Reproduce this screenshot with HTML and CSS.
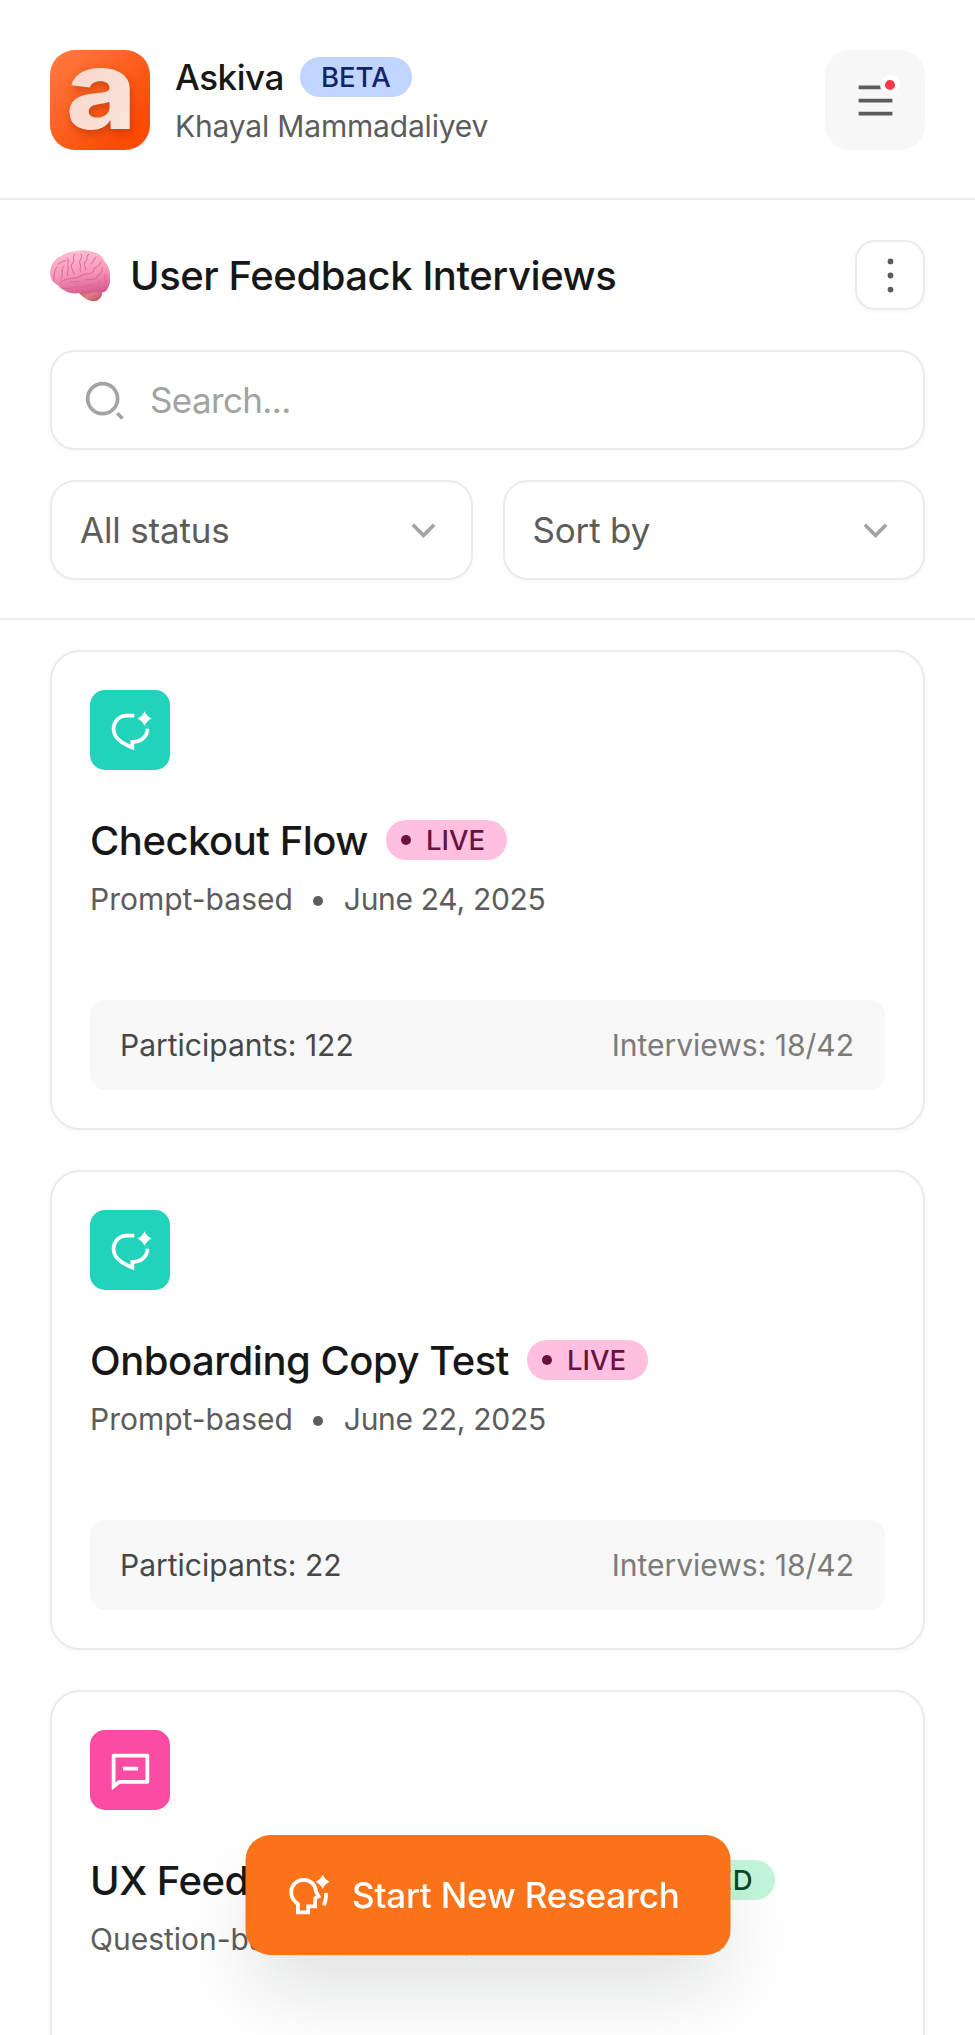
FILE: index.html
```html
<!DOCTYPE html>
<html lang="en">
<head>
    <meta charset="UTF-8">
    <meta name="viewport" content="width=device-width, initial-scale=1.0">
    <title>Askiva</title>
    <link rel="stylesheet" href="styles.css">
</head>
<body>
    <!-- shared icons -->
    <svg class="sprite" aria-hidden="true">
        <symbol id="chat-ai" viewBox="0 0 24 24">
            <path d="M14 3v2h-4a6 6 0 0 0-6 6c0 3.61 2.46 5.97 8 8.48V17h2a6 6 0 0 0 6-6h2a8 8 0 0 1-8 8v3.5c-5-2-12-5-12-11.5a8 8 0 0 1 8-8z"/>
            <path d="M19.5 1.7Q20.7 4.4 23.3 5.6Q20.7 6.8 19.5 9.5Q18.3 6.8 15.7 5.6Q18.3 4.4 19.5 1.7z"/>
        </symbol>
        <symbol id="arrow-down" viewBox="0 0 24 24">
            <path d="M12 13.172l4.95-4.95 1.414 1.414L12 16 5.636 9.636 7.05 8.222z"/>
        </symbol>
    </svg>

    <div class="page">
        <header class="header">
            <div class="logo"><span>a</span></div>
            <div class="brand">
                <div class="brand-name">Askiva <span class="badge beta">BETA</span></div>
                <div class="brand-user">Khayal Mammadaliyev</div>
            </div>
            <button class="menu-btn" aria-label="Menu">
                <svg class="icon" viewBox="0 0 24 24"><path d="M3 4h18v2H3zM3 11h18v2H3zM3 18h18v2H3z"/></svg>
                <span class="menu-dot"></span>
            </button>
        </header>

        <section class="toolbar">
            <div class="title-row">
                <svg class="brain" viewBox="0 0 60 54" aria-hidden="true">
                    <defs>
                        <linearGradient id="pink" x1="0.4" y1="0" x2="0.6" y2="1">
                            <stop offset="0" stop-color="#ffbfd3"/>
                            <stop offset="0.55" stop-color="#f794b8"/>
                            <stop offset="1" stop-color="#d75c8e"/>
                        </linearGradient>
                        <linearGradient id="stem" x1="0" y1="0" x2="1" y2="1">
                            <stop offset="0" stop-color="#a94a55"/>
                            <stop offset="0.5" stop-color="#dd7f8a"/>
                            <stop offset="1" stop-color="#b9505f"/>
                        </linearGradient>
                    </defs>
                    <path fill="url(#stem)" d="M28 42c5-4 18-5 24-1 1 4-2 9-6 10-8 1-12-3-18-9z"/>
                    <path fill="url(#pink)" d="M14 40C10 39 10 36 6 34 2 32 0 27 0 22 1 15 4 9 11 6c4-3 9-4 14-5 6-1 13-1 18 1 6 1 10 5 12 10 4 4 5 9 5 14 1 6-1 11-4 15-4 3-9 1-13 1-4 3-9-1-13 1-6 1-13 0-16-3z"/>
                    <path class="fold" d="M10 34c3-5 8-5 14-6 6 0 7-4 13-4 3 0 5-1 7-3M13 38c6 3 10-2 16-1s9-3 14-2M4 30c0-5 0-9 3-13M8 14c3-1 5-4 8-3M11 29c3-5-1-8 3-13M17 8c3 2 0 6 1 9s-2 5 0 9M25 4c-4 3 1 6-3 10-2 3 1 6 2 10M31 4c3 4-3 6-1 10s-2 5 1 8M39 4c-4 3 0 6-4 8-2 3 1 5 1 8M46 7c-3 3-2 5-5 7M43 20c2-4 7-3 8-8M47 26c3-1 6-4 5-8M35 30c5-2 7 1 12-2M20 32c4-1 6 1 9-1M48 40c-2-4 3-5 1-9M56 24c-3 4 1 8-2 12"/>
                </svg>
                <h1>User Feedback Interviews</h1>
                <button class="more-btn" aria-label="More">
                    <svg class="icon" viewBox="0 0 24 24"><circle cx="12" cy="4.5" r="1.55"/><circle cx="12" cy="12" r="1.55"/><circle cx="12" cy="19.5" r="1.55"/></svg>
                </button>
            </div>

            <div class="field search">
                <svg class="icon" viewBox="0 0 24 24"><path d="M11 2a9 9 0 1 1 0 18 9 9 0 0 1 0-18zm0 2a7 7 0 1 0 0 14 7 7 0 0 0 0-14zM19.5 18.1l2.8 2.8-1.4 1.4-2.8-2.8z"/></svg>
                <span>Search...</span>
            </div>

            <div class="filters">
                <div class="field select">
                    <span>All status</span>
                    <svg class="icon"><use href="#arrow-down"/></svg>
                </div>
                <div class="field select">
                    <span>Sort by</span>
                    <svg class="icon"><use href="#arrow-down"/></svg>
                </div>
            </div>
        </section>

        <main class="list">
            <article class="card">
                <div class="card-icon teal"><svg class="icon"><use href="#chat-ai"/></svg></div>
                <div class="card-title">
                    <h2>Checkout Flow</h2>
                    <span class="badge live">LIVE</span>
                </div>
                <div class="meta"><span>Prompt-based</span><i></i><span class="date">June 24, 2025</span></div>
                <div class="stats"><span>Participants: 122</span><span class="muted">Interviews: 18/42</span></div>
            </article>

            <article class="card">
                <div class="card-icon teal"><svg class="icon"><use href="#chat-ai"/></svg></div>
                <div class="card-title">
                    <h2>Onboarding Copy Test</h2>
                    <span class="badge live">LIVE</span>
                </div>
                <div class="meta"><span>Prompt-based</span><i></i><span class="date">June 22, 2025</span></div>
                <div class="stats"><span>Participants: 22</span><span class="muted">Interviews: 18/42</span></div>
            </article>

            <article class="card">
                <div class="card-icon pink">
                    <svg class="icon" viewBox="0 0 24 24"><path d="M6.455 19L2 22.5V4a1 1 0 0 1 1-1h18a1 1 0 0 1 1 1v14a1 1 0 0 1-1 1H6.455zM4 18.385L5.763 17H20V5H4v13.385zM8 10h8v2H8z"/></svg>
                </div>
                <div class="card-title">
                    <h2>UX Feedback Sessions</h2>
                    <span class="badge completed">COMPLETED</span>
                </div>
                <div class="meta"><span>Question-based</span><i></i><span class="date">June 9, 2025</span></div>
            </article>
        </main>

        <button class="start-btn">
            <svg class="icon" viewBox="0 0 24 24">
                <path class="line" d="M6.6 21v-4.5C4.3 14.7 3 12.7 3 10.2A6.7 6.7 0 0 1 9.7 3.6c3.7 0 6.3 2.7 6.5 6.2l1.5 2.7-1.9.9v4.4h-3.7V21z"/>
                <path class="line" d="M21.6 10.6c.2 2.4-.2 4.6-1.2 6.6"/>
                <path d="M19.8.9Q21 3.5 23.6 4.7Q21 5.9 19.8 8.5Q18.6 5.9 16 4.7Q18.6 3.5 19.8.9z"/>
            </svg>
            <span>Start New Research</span>
        </button>
    </div>
</body>
</html>
```

FILE: styles.css
```css
* {
    margin: 0;
    padding: 0;
    box-sizing: border-box;
}

body {
    font-family: Inter, "Liberation Sans", sans-serif;
    background-color: #fff;
    color: #171717;
}

button {
    border: none;
    font-family: inherit;
    cursor: pointer;
}

.sprite {
    display: none;
}

.page {
    height: 100vh;
    overflow: hidden;
}

.icon {
    width: 45px;
    height: 45px;
    fill: currentColor;
    flex-shrink: 0;
}

/* header */
.header {
    display: flex;
    align-items: center;
    height: 200px;
    padding: 0 50px;
    border-bottom: 2px solid #ebebeb;
}

.logo {
    width: 100px;
    height: 100px;
    margin-top: 2px;
    border-radius: 25px;
    background: linear-gradient(135deg, #ff7c42, #fb4b05 80%);
    display: flex;
    align-items: flex-start;
    justify-content: center;
}

.logo span {
    margin-top: -26px;
    margin-left: 2px;
    font-size: 110px;
    font-weight: 800;
    line-height: 130px;
    background: linear-gradient(120deg, #f7d3c6, #fbe6e0);
    -webkit-background-clip: text;
    background-clip: text;
    color: transparent;
    filter: drop-shadow(1px 4px 4px rgba(140, 30, 0, 0.4));
    transform: scaleX(1.09);
}

.brand {
    margin-left: 25px;
    margin-right: auto;
}

.brand-name {
    display: flex;
    align-items: center;
    gap: 16px;
    font-size: 35px;
    font-weight: 500;
    line-height: 50px;
    letter-spacing: -0.013em;
}

.brand-user {
    margin-top: 4px;
    font-size: 30px;
    line-height: 40px;
    letter-spacing: -0.006em;
    color: #5c5c5c;
}

.badge {
    display: inline-flex;
    align-items: center;
    height: 40px;
    padding: 0 22px;
    border-radius: 20px;
    font-size: 27.5px;
    font-weight: 500;
    line-height: 40px;
    letter-spacing: normal;
}

.beta {
    padding: 0 21px;
    background-color: #c0d5ff;
    color: #122368;
}

.menu-btn {
    position: relative;
    display: flex;
    align-items: center;
    justify-content: center;
    width: 100px;
    height: 100px;
    margin-top: 2px;
    border-radius: 25px;
    background-color: #f7f7f7;
    color: #5c5c5c;
}

.menu-dot {
    position: absolute;
    top: 25px;
    right: 25px;
    width: 20px;
    height: 20px;
    border: 5px solid #fff;
    border-radius: 50%;
    background-color: #fb3748;
}

/* title, search and filters */
.toolbar {
    display: flex;
    flex-direction: column;
    height: 420px;
    padding: 40px 50px 0;
    border-bottom: 2px solid #ebebeb;
}

.title-row {
    display: flex;
    align-items: center;
    margin-bottom: 40px;
}

.title-row h1 {
    margin-right: auto;
    font-size: 40px;
    font-weight: 500;
    letter-spacing: -0.011em;
}

.brain {
    width: 60px;
    height: 54px;
    margin-top: 3px;
    margin-right: 20px;
}

.fold {
    fill: none;
    stroke: #d9668f;
    stroke-width: 1;
    stroke-linecap: round;
}

.more-btn {
    display: flex;
    align-items: center;
    justify-content: center;
    width: 70px;
    height: 70px;
    border: 2px solid #ebebeb;
    border-radius: 20px;
    background-color: #fff;
    color: #5c5c5c;
    box-shadow: 0 2px 5px rgba(10, 13, 20, 0.03);
}

.field {
    display: flex;
    align-items: center;
    height: 100px;
    border: 2px solid #ebebeb;
    border-radius: 25px;
    background-color: #fff;
    font-size: 35px;
    letter-spacing: -0.005em;
    box-shadow: 0 2px 5px rgba(10, 13, 20, 0.03);
}

.search {
    gap: 23px;
    margin-bottom: 30px;
    padding-left: 30px;
    color: #a3a3a3;
    letter-spacing: -0.018em;
}

.filters {
    display: grid;
    grid-template-columns: 1fr 1fr;
    gap: 30px;
}

.select {
    justify-content: space-between;
    padding: 0 25px 0 28px;
    color: #5c5c5c;
}

.select .icon {
    color: #a3a3a3;
}

/* research cards */
.list {
    display: flex;
    flex-direction: column;
    gap: 40px;
    padding: 30px 50px;
}

.card {
    height: 480px;
    padding: 38px;
    border: 2px solid #ebebeb;
    border-radius: 30px;
    background-color: #fff;
    flex-shrink: 0;
    box-shadow: 0 2px 5px rgba(10, 13, 20, 0.03);
}

.card-icon {
    display: flex;
    align-items: center;
    justify-content: center;
    width: 80px;
    height: 80px;
    border-radius: 15px;
    color: #fff;
}

.teal {
    background-color: #22d3bb;
}

.pink {
    background-color: #fb4ba3;
}

.card-title {
    display: flex;
    align-items: center;
    gap: 18px;
    margin-top: 40px;
    height: 60px;
}

.card-title h2 {
    font-size: 40px;
    font-weight: 500;
    letter-spacing: -0.012em;
}

.live,
.completed {
    padding-left: 15px;
}

.live {
    background-color: #ffc0df;
    color: #68123d;
}

.completed {
    background-color: #c2f5da;
    color: #0b4627;
    letter-spacing: 0.024em;
}

.live::before,
.completed::before {
    content: "";
    width: 10px;
    height: 10px;
    margin-right: 15px;
    border-radius: 50%;
    background-color: currentColor;
}

.meta {
    display: flex;
    align-items: center;
    gap: 20px;
    margin-top: 9px;
    font-size: 30px;
    line-height: 40px;
    color: #5c5c5c;
}

.meta i {
    width: 10px;
    height: 10px;
    margin-top: 3px;
    border-radius: 50%;
    background-color: currentColor;
}

.date {
    margin-left: 1px;
    letter-spacing: -0.01em;
}

.stats {
    display: flex;
    align-items: center;
    justify-content: space-between;
    height: 90px;
    margin-top: 81px;
    padding: 0 31px 0 30px;
    border-radius: 15px;
    background-color: #f8f8f8;
    font-size: 30px;
    color: #474747;
}

.muted {
    color: #7b7b7b;
}

/* floating action */
.start-btn {
    position: fixed;
    left: 50%;
    bottom: 80px;
    transform: translateX(-50%);
    display: flex;
    align-items: center;
    gap: 22px;
    width: 485px;
    height: 120px;
    padding-left: 40px;
    border-radius: 25px;
    background-color: #fa7319;
    color: #fff;
    font-size: 35px;
    font-weight: 500;
    letter-spacing: -0.006em;
    white-space: nowrap;
    box-shadow: 0 40px 80px -10px rgba(14, 18, 27, 0.14);
}

.line {
    fill: none;
    stroke: currentColor;
    stroke-width: 2;
}
```
